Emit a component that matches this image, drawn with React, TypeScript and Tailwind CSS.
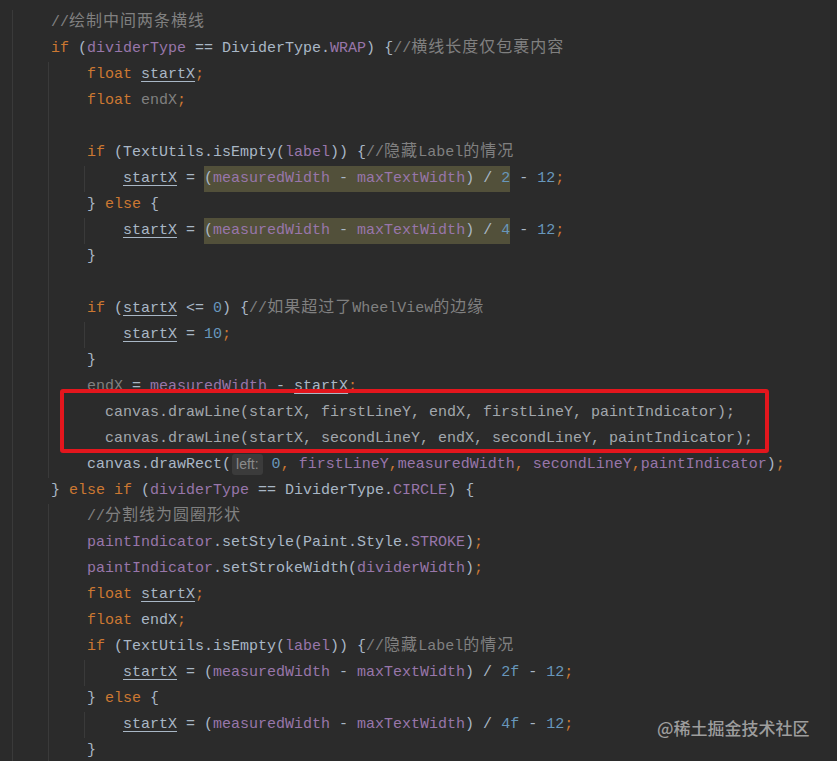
import type { ReactNode } from "react";

type Kids = { children?: ReactNode };

const Kw = ({ children }: Kids) => <span className="text-[#cc7832]">{children}</span>;
const Fd = ({ children }: Kids) => <span className="text-[#9876aa]">{children}</span>;
const Nm = ({ children }: Kids) => <span className="text-[#6897bb]">{children}</span>;
const Cm = ({ children }: Kids) => <span className="text-[#808080]">{children}</span>;
const Sc = () => <span className="text-[#cc7832]">;</span>;
const Co = () => <span className="text-[#cc7832]">,</span>;
const V = ({ children }: Kids) => (
  <span className="underline underline-offset-[3px] decoration-1">{children}</span>
);
const Zh = ({ children }: Kids) => (
  <span className="font-['Noto_Sans_CJK_SC',sans-serif] text-[16px] leading-[16px] tracking-[1px]">
    {children}
  </span>
);
const Hl = ({ children }: Kids) => (
  <span className="inline-block bg-[#52503a]">{children}</span>
);

const Line = ({ level, guides, children }: { level: number; guides?: number[]; children?: ReactNode }) => {
  const g = guides ?? Array.from({ length: level }, (_, i) => (i < 2 ? 1 : 0));
  return (
    <div className="flex h-[26px] pl-[12px] leading-[26px] whitespace-pre">
      {g.map((on, i) => (
        <span
          key={i}
          className={on ? "w-[36px] shrink-0 h-full border-l border-[#3a3a3a]" : "w-[36px] shrink-0 h-full"}
        />
      ))}
      <span className="pl-[3px]">{children}</span>
    </div>
  );
};

const EmptyDesc = () => (
  <>
    <Kw>if</Kw> (TextUtils.isEmpty(<Fd>label</Fd>)) {"{"}
    <Cm>
      //<Zh>隐藏</Zh>Label<Zh>的情况</Zh>
    </Cm>
  </>
);

export default function App() {
  return (
    <div className="relative w-[837px] h-[761px] overflow-hidden bg-[#2b2b2b] pt-[10px] font-['Liberation_Mono','Noto_Sans_CJK_SC',monospace] text-[15px] text-[#a9b7c6]">
      <Line level={1}>
        <Cm>
          //<Zh>绘制中间两条横线</Zh>
        </Cm>
      </Line>
      <Line level={1}>
        <Kw>if</Kw> (<Fd>dividerType</Fd> == DividerType.<Fd>WRAP</Fd>) {"{"}
        <Cm>
          //<Zh>横线长度仅包裹内容</Zh>
        </Cm>
      </Line>
      <Line level={2}>
        <Kw>float</Kw> <V>startX</V>
        <Sc />
      </Line>
      <Line level={2}>
        <Kw>float</Kw> <span className="text-[#808080]">endX</span>
        <Sc />
      </Line>
      <Line level={2} />
      <Line level={2}>
        <EmptyDesc />
      </Line>
      <Line level={3} guides={[1, 1, 1]}>
        <V>startX</V> ={" "}
        <Hl>
          (<Fd>measuredWidth</Fd> - <Fd>maxTextWidth</Fd>) / <Nm>2</Nm>
        </Hl>{" "}
        - <Nm>12</Nm>
        <Sc />
      </Line>
      <Line level={2}>
        {"} "}
        <Kw>else</Kw> {"{"}
      </Line>
      <Line level={3} guides={[1, 1, 1]}>
        <V>startX</V> ={" "}
        <Hl>
          (<Fd>measuredWidth</Fd> - <Fd>maxTextWidth</Fd>) / <Nm>4</Nm>
        </Hl>{" "}
        - <Nm>12</Nm>
        <Sc />
      </Line>
      <Line level={2}>{"}"}</Line>
      <Line level={2} />
      <Line level={2}>
        <Kw>if</Kw> (<V>startX</V> &lt;= <Nm>0</Nm>) {"{"}
        <Cm>
          //<Zh>如果超过了</Zh>WheelView<Zh>的边缘</Zh>
        </Cm>
      </Line>
      <Line level={3} guides={[1, 1, 1]}>
        <V>startX</V> = <Nm>10</Nm>
        <Sc />
      </Line>
      <Line level={2}>{"}"}</Line>
      <Line level={2}>
        <span className="text-[#808080]">endX</span> = <Fd>measuredWidth</Fd> - <V>startX</V>
        <Sc />
      </Line>
      <Line level={2}>
        <span className="text-[#a2a7ad]">
          {"  canvas.drawLine(startX, firstLineY, endX, firstLineY, paintIndicator);"}
        </span>
      </Line>
      <Line level={2}>
        <span className="text-[#a2a7ad]">
          {"  canvas.drawLine(startX, secondLineY, endX, secondLineY, paintIndicator);"}
        </span>
      </Line>
      <Line level={2}>
        canvas.drawRect(
        <span className="inline-block h-[21px] leading-[21px] align-middle rounded-[3px] bg-[#3b3b3b] px-[4px] ml-[1px] mr-[9px] font-['Liberation_Sans',sans-serif] text-[14px] text-[#8a8a8a]">
          left:
        </span>
        <Nm>0</Nm>
        <Co /> <Fd>firstLineY</Fd>
        <Co />
        <Fd>measuredWidth</Fd>
        <Co /> <Fd>secondLineY</Fd>
        <Co />
        <Fd>paintIndicator</Fd>)
        <Sc />
      </Line>
      <Line level={1}>
        {"} "}
        <Kw>else if</Kw> (<Fd>dividerType</Fd> == DividerType.<Fd>CIRCLE</Fd>) {"{"}
      </Line>
      <Line level={2}>
        <Cm>
          //<Zh>分割线为圆圈形状</Zh>
        </Cm>
      </Line>
      <Line level={2}>
        <Fd>paintIndicator</Fd>.setStyle(Paint.Style.<Fd>STROKE</Fd>)
        <Sc />
      </Line>
      <Line level={2}>
        <Fd>paintIndicator</Fd>.setStrokeWidth(<Fd>dividerWidth</Fd>)
        <Sc />
      </Line>
      <Line level={2}>
        <Kw>float</Kw> <V>startX</V>
        <Sc />
      </Line>
      <Line level={2}>
        <Kw>float</Kw> endX
        <Sc />
      </Line>
      <Line level={2}>
        <EmptyDesc />
      </Line>
      <Line level={3} guides={[1, 1, 1]}>
        <V>startX</V> = (<Fd>measuredWidth</Fd> - <Fd>maxTextWidth</Fd>) / <Nm>2f</Nm> - <Nm>12</Nm>
        <Sc />
      </Line>
      <Line level={2}>
        {"} "}
        <Kw>else</Kw> {"{"}
      </Line>
      <Line level={3} guides={[1, 1, 1]}>
        <V>startX</V> = (<Fd>measuredWidth</Fd> - <Fd>maxTextWidth</Fd>) / <Nm>4f</Nm> - <Nm>12</Nm>
        <Sc />
      </Line>
      <Line level={2}>{"}"}</Line>

      {/* annotation box */}
      <div className="absolute left-[60px] top-[389px] w-[709px] h-[64px] rounded-[3px] border-4 border-[#e3161d]" />

      {/* watermark */}
      <div className="absolute left-[657px] top-[716px] font-['Noto_Sans_CJK_SC',sans-serif] text-[17px] leading-[24px] font-medium text-[#9d9d9d]">
        @稀土掘金技术社区
      </div>
    </div>
  );
}
